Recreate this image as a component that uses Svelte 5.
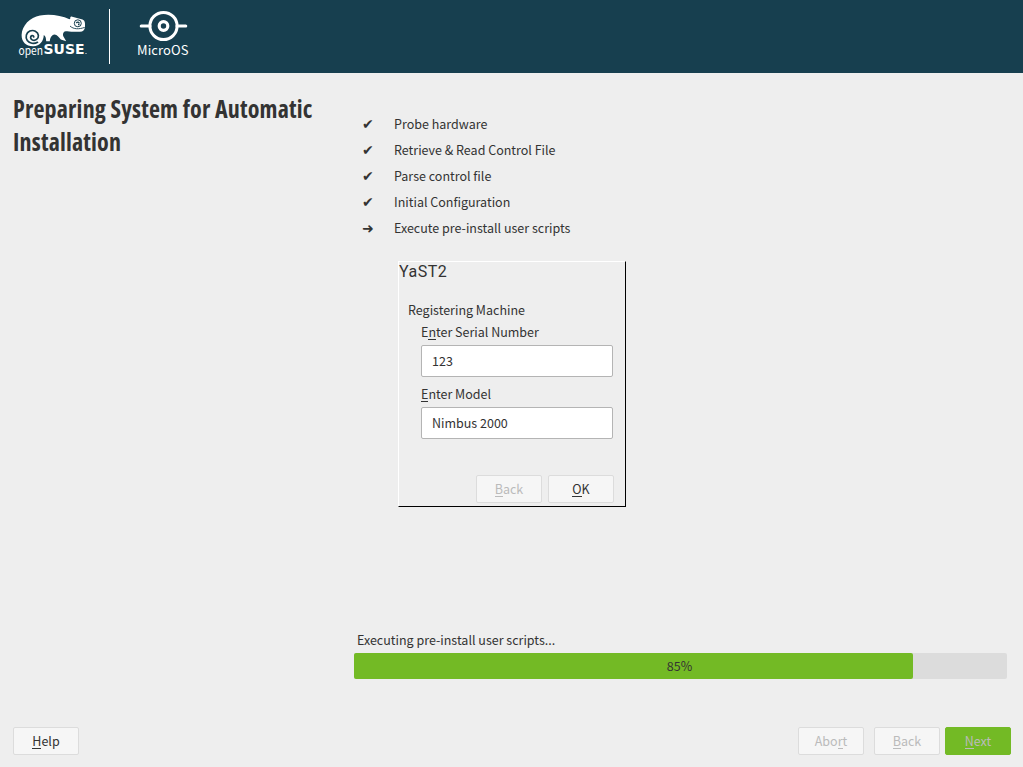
<script>
  const steps = [
    ['✔', 'Probe hardware'],
    ['✔', 'Retrieve & Read Control File'],
    ['✔', 'Parse control file'],
    ['✔', 'Initial Configuration'],
    ['➜', 'Execute pre-install user scripts']
  ];
  const progress = 85.6;
  let serial = $state('123');
  let model = $state('Nimbus 2000');
</script>

<div class="screen">
  <header>
    <svg class="suse" width="72" height="50" viewBox="0 0 72 50" aria-label="openSUSE">
      <path fill="#fff" d="M15 34.300C8 34 3.500 30 3.600 23C3.900 13.500 12 5 22 3.400C33 1.800 43 3.500 51.500 7.200L52.300 6.500V5.300C52.700 4.500 53.400 4.500 54.200 4.800L64.500 7.500C67 8.400 67.300 11.500 67 14.800C66.700 18.300 65 19.800 62 19.800H56C52.200 19.500 49.600 19.200 47.700 19.200C45.200 19.500 44.700 22 45.300 24.300L48.200 29.300L42.800 27.600C40.700 25.200 39.300 22.800 36.500 22.600C33.500 23 32.200 26 31.800 29.300H28.200C28 26 27.600 24 25.800 23C25.600 29 21.800 34.500 15 34.300Z" />
      <path fill="none" stroke="#173f4f" stroke-width="1.700" stroke-linecap="round" d="M19.500 30.300C16 32.300 11.500 31.500 9.300 28.500C7 25 8.300 20.700 11.800 19.100C15.500 17.500 20 19.500 20.400 23.300C20.700 26.800 17.300 29.200 14.400 28C12.200 27 11.900 24.300 14 23.600C15 23.400 16 24 15.700 25" />
      <circle cx="59.800" cy="11.300" r="3.500" fill="none" stroke="#173f4f" stroke-width="1" />
      <path fill="none" stroke="#173f4f" stroke-width="1.300" d="M58.300 11C59.300 9.700 61 10 61.300 11.300M60 12.500H61.500" />
      <path fill="none" stroke="#173f4f" stroke-width=".9" d="M52 14C55.500 17.400 61 17.400 66.700 15.400" />
      <text class="open" x=".5" y="42.500" textLength="24.500" lengthAdjust="spacingAndGlyphs">open</text>
      <text class="brand" x="25.500" y="42.400" textLength="41" lengthAdjust="spacingAndGlyphs">SUSE</text>
      <circle cx="68" cy="41.500" r=".6" fill="#fff" />
    </svg>
    <i class="divider"></i>
    <div class="product">
      <svg width="50" height="32" viewBox="0 0 50 32" fill="none" stroke="#fff" stroke-width="3">
        <path stroke-linecap="round" d="M2.200 16H11M38 16H46.800" />
        <circle cx="24.500" cy="16" r="13.600" />
        <circle cx="24.500" cy="16" r="4.300" stroke-width="3.200" />
      </svg>
      <span>MicroOS</span>
    </div>
  </header>

  <div class="content">
    <h1>Preparing System for Automatic<br />Installation</h1>
    <main>
      <ul>
        {#each steps as [mark, label]}
          <li><span class="mark">{mark}</span><span>{label}</span></li>
        {/each}
      </ul>
      <section class="dialog">
        <h2>YaST2</h2>
        <p>Registering Machine</p>
        <label for="serial">E<u>n</u>ter Serial Number</label>
        <input id="serial" bind:value={serial} />
        <label for="model"><u>E</u>nter Model</label>
        <input id="model" bind:value={model} />
        <div class="actions">
          <button disabled><span><u>B</u>ack</span></button>
          <button><span><u>O</u>K</span></button>
        </div>
      </section>
      <div class="status">Executing pre-install user scripts...</div>
      <div class="track">
        <div class="bar" style:width="{progress}%"></div>
        <span>85%</span>
      </div>
    </main>
  </div>

  <footer>
    <button class="help"><span><u>H</u>elp</span></button>
    <button class="abort" disabled><span>Abo<u>r</u>t</span></button>
    <button class="back" disabled><span><u>B</u>ack</span></button>
    <button class="next" disabled><span><u>N</u>ext</span></button>
  </footer>
</div>

<style>
  :global(body) { margin: 0; background: #eee; }
  .screen {
    display: flex; flex-direction: column; width: 1023px; height: 767px; overflow: hidden;
    background: #eee; color: #333;
    font: 400 12.5px/20px "Noto Sans CJK SC", sans-serif;
  }
  header { display: flex; height: 73px; flex: none; background: #173f4f; color: #fff; }
  .suse { margin: 12px 0 0 18px; overflow: visible; }
  .open { fill: #fff; font: 400 11.500px "Noto Sans CJK SC", sans-serif; }
  .brand { fill: #fff; font: 700 13.200px "DejaVu Sans", sans-serif; }
  .divider { width: 1px; height: 55px; margin: 9px 0 0 19px; background: #fff; }
  .product { display: flex; flex-direction: column; width: 70px; margin: 10px 0 0 27px; }
  .product svg { margin-left: 2px; }
  .product span { font-size: 13px; line-height: 16px; letter-spacing: .1px; }
  .content { display: flex; flex: 1; }
  h1 {
    width: 341px; margin: 19px 0 0 13px; flex: none; white-space: nowrap;
    font: 700 24px/33px "Open Sans", sans-serif; font-stretch: 75%; letter-spacing: .18px;
  }
  main { width: 653px; flex: none; }
  ul { margin: 38px 0 0 8px; padding: 0; list-style: none; }
  li { display: flex; height: 26px; line-height: 26px; }
  .mark { width: 32px; font-family: "DejaVu Sans", sans-serif; font-size: 14px; }
  .dialog {
    display: flex; flex-direction: column; box-sizing: border-box; width: 228px; height: 246px;
    margin: 20px 0 0 44px; border: 1px solid; border-color: #fff #000 #000 #fff;
  }
  h2 { margin: 0; font: 400 16px/20px Roboto, sans-serif; letter-spacing: .5px; }
  p { margin: 18px 0 0 9px; line-height: 20px; }
  label { height: 24px; margin-left: 22px; line-height: 24px; }
  input {
    box-sizing: border-box; width: 192px; height: 32px; margin: 1px 0 5px 22px; padding: 0 10px 1px;
    border: 1px solid #b4b4b4; border-radius: 2px; background: #fff; color: #333; font: inherit;
  }
  u { text-decoration: none; box-shadow: 0 1px 0 currentColor; display: inline-block; height: 17px; line-height: 20px; }
  .actions { display: flex; justify-content: flex-end; gap: 6px; margin: 31px 11px 0 0; }
  button {
    width: 66px; height: 28px; box-sizing: border-box; padding: 0; border: 1px solid #dcdcdc;
    border-radius: 2px; background: #f6f6f6; color: #333; font: inherit;
  }
  button:disabled { color: #bbb; }
  .status { margin: 123px 0 0 3px; }
  .track {
    display: grid; height: 26px; margin-top: 3px; border-radius: 2px; background: #dcdcdc;
    line-height: 26px; text-align: center;
  }
  .track > * { grid-area: 1 / 1; }
  .track span { padding-right: 2px; }
  .bar { border-radius: 2px; background: #73ba25; }
  footer { display: flex; height: 40px; flex: none; padding: 0 12px 0 13px; }
  .abort { margin-left: auto; }
  .back { margin: 0 5px 0 10px; }
  .next { border-color: #73ba25; background: #73ba25; }
</style>
